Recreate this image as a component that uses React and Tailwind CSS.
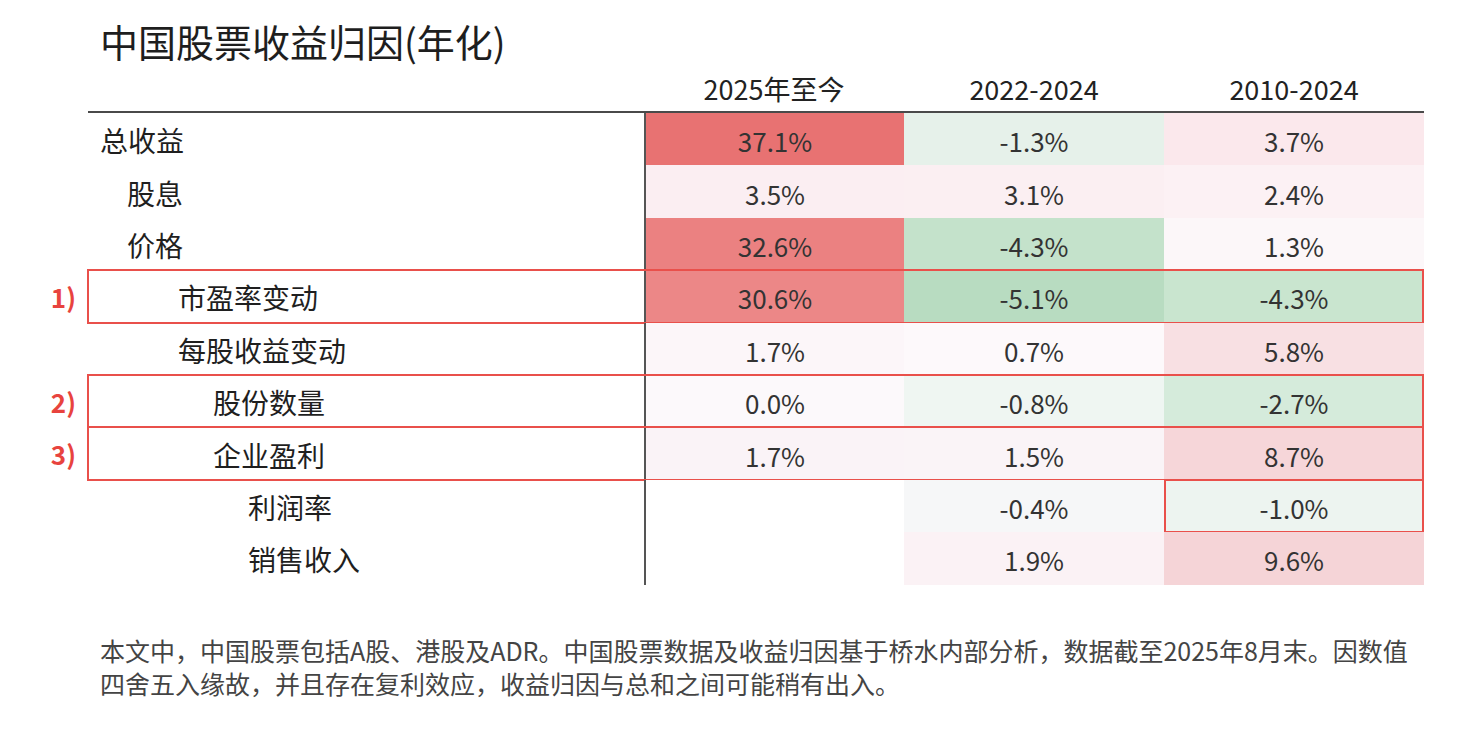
import React from "react";

const rows = [
  { label: "总收益", indent: "pl-[12px]", cells: [["37.1%", "bg-[#e87272]"], ["-1.3%", "bg-[#e6f1ea]"], ["3.7%", "bg-[#fbe8ec]"]] },
  { label: "股息", indent: "pl-[39px]", cells: [["3.5%", "bg-[#fbeef2]"], ["3.1%", "bg-[#fbeff2]"], ["2.4%", "bg-[#fcf1f4]"]] },
  { label: "价格", indent: "pl-[39px]", cells: [["32.6%", "bg-[#eb8181]"], ["-4.3%", "bg-[#c4e2cb]"], ["1.3%", "bg-[#fcf7f9]"]] },
  { label: "市盈率变动", indent: "pl-[90px]", mark: "1)", box: "row", cells: [["30.6%", "bg-[#ec8787]"], ["-5.1%", "bg-[#b8dcc1]"], ["-4.3%", "bg-[#c9e5cf]"]] },
  { label: "每股收益变动", indent: "pl-[90px]", cells: [["1.7%", "bg-[#fcf6f9]"], ["0.7%", "bg-[#fdf9fb]"], ["5.8%", "bg-[#f8e0e3]"]] },
  { label: "股份数量", indent: "pl-[125px]", mark: "2)", box: "row", cells: [["0.0%", "bg-[#fcf9fb]"], ["-0.8%", "bg-[#eff6f2]"], ["-2.7%", "bg-[#d5ebdb]"]] },
  { label: "企业盈利", indent: "pl-[125px]", mark: "3)", box: "row", cells: [["1.7%", "bg-[#faf3f7]"], ["1.5%", "bg-[#faf4f7]"], ["8.7%", "bg-[#f6d6d9]"]] },
  { label: "利润率", indent: "pl-[160px]", box: "last", cells: [["", "bg-white"], ["-0.4%", "bg-[#f6f7f8]"], ["-1.0%", "bg-[#edf4f0]"]] },
  { label: "销售收入", indent: "pl-[160px]", cells: [["", "bg-white"], ["1.9%", "bg-[#fbf2f5]"], ["9.6%", "bg-[#f5d4d7]"]] },
];

const font = "font-['Noto_Sans_CJK_SC',sans-serif]";

export default function App() {
  return (
    <div className={`w-[1484px] h-[734px] bg-white text-[#222] ${font}`}>
      {/* Title */}
      <div className="pl-[100px] pt-[19px] h-[64px] text-[38px] leading-[44px] text-[#1e1e1e]">
        中国股票收益归因(年化)
      </div>

      <div className="pl-[40px] flex flex-col">
        {/* Header */}
        <div className="flex">
          <div className="w-[48px]" />
          <div className="w-[1336px]">
            <div className="flex h-[47px] items-center pt-[4px] text-[27px] text-[#222]">
              <div className="w-[556px]" />
              <div className="w-[260px] text-center">2025年至今</div>
              <div className="w-[260px] text-center">2022-2024</div>
              <div className="w-[260px] text-center">2010-2024</div>
            </div>
            <div className="h-[2px] bg-[#4a4a4a]" />
          </div>
        </div>

        {/* Rows */}
        {rows.map((r) => (
          <div key={r.label} className="flex h-[52.4px]">
            <div className="w-[48px] pr-[12px] flex items-center justify-end text-[26px] font-bold text-[#e8433e]">
              {r.mark}
            </div>
            <div className="relative w-[1336px] flex">
              <div className={`w-[556px] flex items-center pt-[2px] text-[28px] text-[#1f1f1f] ${r.indent}`}>
                {r.label}
              </div>
              <div className="flex border-l-2 border-[#555]">
                {r.cells.map(([v, bg], i) => (
                  <div
                    key={i}
                    className={`${i === 0 ? "w-[258px]" : "w-[260px]"} ${bg} flex items-center justify-center pt-[3px] text-[26px] text-[#333]`}
                  >
                    {v}
                  </div>
                ))}
              </div>
              {r.box === "row" && (
                <div className="absolute left-[-1px] right-0 -top-px -bottom-px border-2 border-[#e9504b] pointer-events-none" />
              )}
              {r.box === "last" && (
                <div className="absolute left-[1076px] right-0 -top-px -bottom-px border-2 border-[#e9504b] pointer-events-none" />
              )}
            </div>
          </div>
        ))}
      </div>

      {/* Footnote */}
      <div className="pl-[100px] pt-[49px] text-[25px] leading-[33px] text-[#444]">
        <div className="whitespace-nowrap">
          本文中，中国股票包括A股、港股及ADR。中国股票数据及收益归因基于桥水内部分析，数据截至2025年8月末。因数值
        </div>
        <div className="whitespace-nowrap">四舍五入缘故，并且存在复利效应，收益归因与总和之间可能稍有出入。</div>
      </div>
    </div>
  );
}
